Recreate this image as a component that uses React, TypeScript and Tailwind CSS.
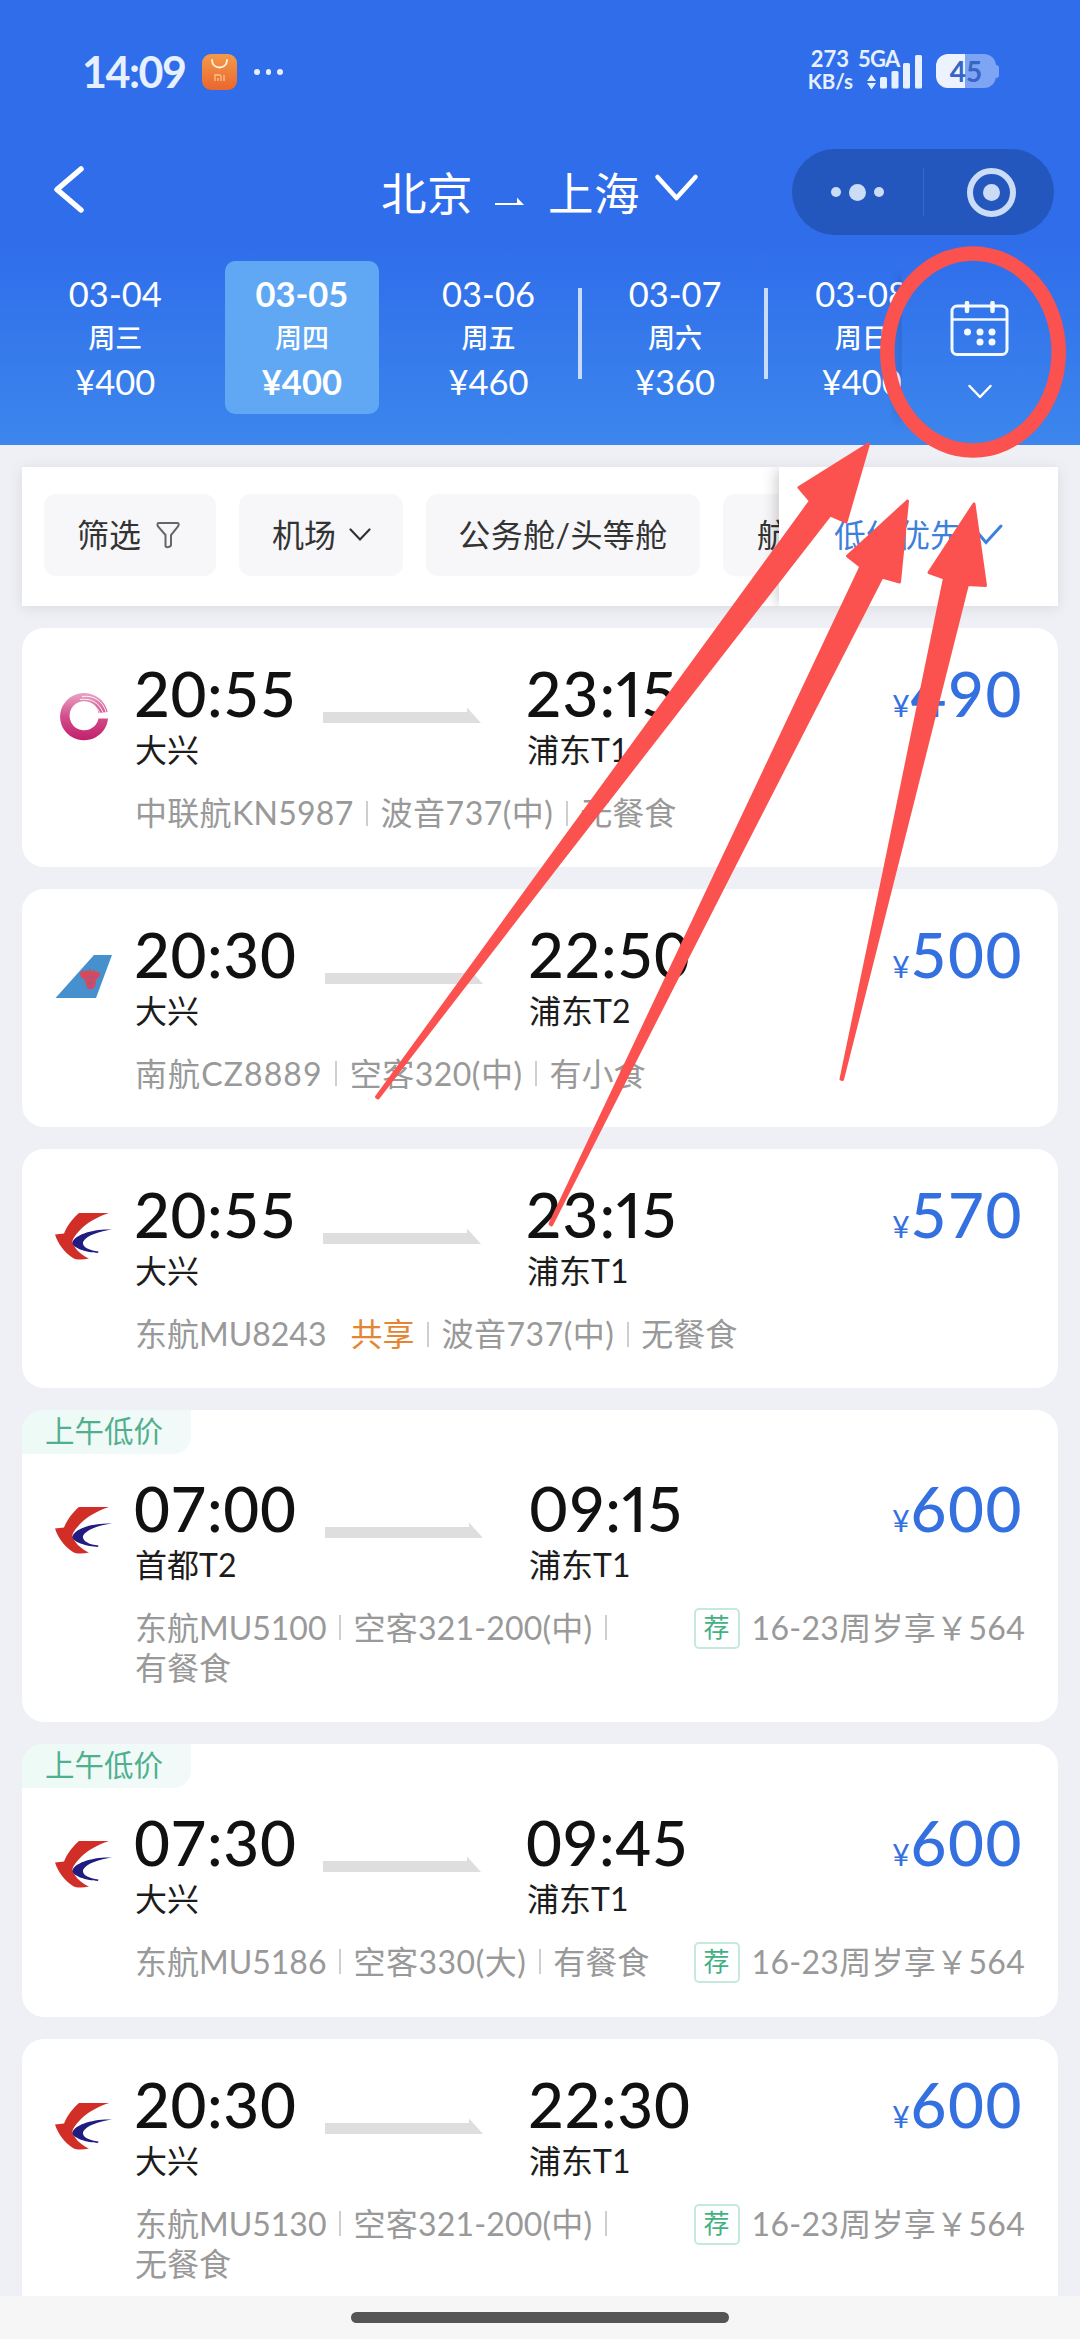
import React from "react";

type Airline = "cu" | "cz" | "mu";

interface Flight {
  airline: Airline;
  dep: string;
  depPort: string;
  arr: string;
  arrPort: string;
  price: string;
  code: string;
  plane: string;
  meal: string;
  shared?: boolean;
  tag?: string;
  promo?: string;
  narrow?: boolean;
}

const flights: Flight[] = [
  { airline: "cu", dep: "20:55", depPort: "大兴", arr: "23:15", arrPort: "浦东T1", price: "490", code: "中联航KN5987", plane: "波音737(中)", meal: "无餐食", narrow: true },
  { airline: "cz", dep: "20:30", depPort: "大兴", arr: "22:50", arrPort: "浦东T2", price: "500", code: "南航CZ8889", plane: "空客320(中)", meal: "有小食" },
  { airline: "mu", dep: "20:55", depPort: "大兴", arr: "23:15", arrPort: "浦东T1", price: "570", code: "东航MU8243", plane: "波音737(中)", meal: "无餐食", shared: true, narrow: true },
  { airline: "mu", dep: "07:00", depPort: "首都T2", arr: "09:15", arrPort: "浦东T1", price: "600", code: "东航MU5100", plane: "空客321-200(中)", meal: "有餐食", tag: "上午低价", promo: "16-23周岁享￥564" },
  { airline: "mu", dep: "07:30", depPort: "大兴", arr: "09:45", arrPort: "浦东T1", price: "600", code: "东航MU5186", plane: "空客330(大)", meal: "有餐食", tag: "上午低价", promo: "16-23周岁享￥564", narrow: true },
  { airline: "mu", dep: "20:30", depPort: "大兴", arr: "22:30", arrPort: "浦东T1", price: "600", code: "东航MU5130", plane: "空客321-200(中)", meal: "无餐食", promo: "16-23周岁享￥564" },
];

const codeTracking: Record<Airline, string> = {
  cu: "tracking-[0.300px]",
  cz: "tracking-[1.100px]",
  mu: "tracking-[0px]",
};

const days = [
  { date: "03-04", week: "周三", price: "¥400" },
  { date: "03-05", week: "周四", price: "¥400", active: true },
  { date: "03-06", week: "周五", price: "¥460" },
  { date: "03-07", week: "周六", price: "¥360", divider: true },
  { date: "03-08", week: "周日", price: "¥400", divider: true },
];

function AirlineLogo({ kind }: { kind: Airline }) {
  if (kind === "cu") {
    return (
      <svg width="58" height="50" viewBox="0 0 58 50" fill="none">
        <defs>
          <linearGradient id="cu" x1="0" y1="0" x2="0" y2="1">
            <stop offset="0" stopColor="#e9a3c6" />
            <stop offset="0.5" stopColor="#d24d8c" />
            <stop offset="1" stopColor="#c2206a" />
          </linearGradient>
        </defs>
        <path d="M53 27.5A24 23.6 0 1 1 52.6 21L43.5 22A14.6 14.6 0 1 0 43.5 27.5Z" fill="url(#cu)" />
        <path d="M27 5.5C39 4 48 10 51 21M25 8.500C37 7 44 12 48 21.500M25 11.500C35 10 41 14 45 22" stroke="#fff" strokeWidth="0.9" />
      </svg>
    );
  }
  if (kind === "cz") {
    return (
      <svg width="58" height="50" viewBox="0 0 58 50">
        <path d="M39 3H57L41 46H0.500Z" fill="#4690cd" />
        <path d="M25 21C27 17 31 21 32 18L33.500 20L35 15.500L36.500 20L38.500 18C40 21 43 18 45 22C45 26 42 26 41 28C41 32 40 35 38 37H33C31 35 31 32 30 28C28 27 25 25 25 21Z" fill="#d8495c" />
        <path d="M31 25H41M35.500 27V36M32.500 31H39" stroke="#8b5f9a" strokeWidth="0.9" />
      </svg>
    );
  }
  return (
    <svg width="58" height="50" viewBox="0 0 58 50">
      <path d="M24 1H54C42 5 32 11 26 17C20 23 17 28 17.500 30C19 36 25 42.500 34 46.500C28 48 21 48 18 46C9 40 3 32 0 22.500L9 21.500C12 14 18 6 24 1Z" fill="#d12e28" />
      <path d="M57 17.500C45 19 31 23.500 28 30C27 35 34 38.500 43.500 39.500L43 41C32 40.500 17 36 17.500 30.500C19 23 38 16.500 57 17.500Z" fill="#201c80" />
    </svg>
  );
}

function Pipe() {
  return <span className="mx-[12.500px] h-[25px] w-[2px] shrink-0 bg-[#cfcfcf]" />;
}

function Stop({ time, port }: { time: string; port: string }) {
  const figures = time.includes("1") ? "proportional-nums tracking-[1.200px]" : "tabular-nums tracking-[0.600px]";
  return (
    <>
      <div className={`-ml-px whitespace-nowrap text-[62px] font-medium leading-[64px] text-[#111] ${figures}`}>{time}</div>
      <div className="mt-[5px] text-[32px] leading-[40px] text-[#1c1c1c]">{port}</div>
    </>
  );
}

function FlightCard({ f }: { f: Flight }) {
  return (
    <article className="shrink-0 overflow-hidden rounded-[22px] bg-white">
      {f.tag && (
        <div className="flex h-[44px] w-[169px] items-center rounded-br-[18px] bg-gradient-to-r from-[#edfaf6] to-[#f2faf9] pb-[2px] pl-[23px] text-[29.500px] text-[#50b08e]">
          {f.tag}
        </div>
      )}
      <div className={f.tag ? "flex pb-[34px] pt-[22px]" : "flex pb-[33.600px] pt-[33px]"}>
        <div className="ml-[33px] mt-[30px] w-[80px] shrink-0">
          <AirlineLogo kind={f.airline} />
        </div>
        <div className="flex grow flex-col">
          <div className="flex pr-[35px]">
            <div className={f.narrow ? "w-[188px]" : "w-[190px]"}>
              <Stop time={f.dep} port={f.depPort} />
            </div>
            <svg className="mt-[46px]" width="159" height="17" viewBox="0 0 159 17">
              <path d="M0 5H144V0.500L158 16H0Z" fill="#dedede" />
            </svg>
            <div className="ml-[45px]">
              <Stop time={f.arr} port={f.arrPort} />
            </div>
            <div className="ml-auto flex h-[64px] items-baseline text-[#3470df]">
              <span className="mr-px text-[30px] leading-[64px]">¥</span>
              <span className="text-[62px] font-medium tabular-nums leading-[64px] tracking-[1.500px]">{f.price}</span>
            </div>
          </div>
          <div className="mt-[23px] flex items-start justify-between pr-[33px] text-[32px] leading-[40px] text-[#999]">
            <div className={`flex flex-wrap items-center whitespace-nowrap ${f.promo ? "max-w-[545px]" : ""}`}>
              <span className={codeTracking[f.airline]}>{f.code}</span>
              {f.shared && <span className="ml-[24px] text-[#e58530]">共享</span>}
              <Pipe />
              <span className={f.plane.includes("-") ? "tracking-[0.200px]" : "tracking-[0.500px]"}>{f.plane}</span>
              <Pipe />
              <span>{f.meal}</span>
            </div>
            {f.promo && (
              <div className="flex items-center whitespace-nowrap">
                <span className="mr-[12px] flex h-[41px] w-[46px] items-center justify-center rounded-[5px] border-2 border-[#c5e9dc] pb-[2px] text-[26px] leading-none text-[#43b083]">
                  荐
                </span>
                <span className="tracking-[0.300px]">{f.promo}</span>
              </div>
            )}
          </div>
        </div>
      </div>
    </article>
  );
}

function StatusBar() {
  return (
    <div className="flex h-[145px] items-start pl-[82px] pr-[81px] text-[#e6f0ff]">
      <span className="mt-[46px] w-[120px] text-[43px] font-bold leading-[52px] tracking-[-1.500px]">14:09</span>
      <svg className="mt-[54px]" width="36" height="36" viewBox="0 0 36 36" fill="none">
        <defs>
          <linearGradient id="bag" x1="0" y1="0" x2="0" y2="1">
            <stop offset="0" stopColor="#f39a4a" />
            <stop offset="1" stopColor="#ea662d" />
          </linearGradient>
        </defs>
        <rect width="35" height="36" rx="9" fill="url(#bag)" />
        <path d="M10 6C10 16 25 16 25 6" stroke="#fff1df" strokeWidth="1.800" strokeLinecap="round" />
        <path d="M13 27V21H17.500C19 21 19 22 19 23V27M16 24V27M22 21V27" stroke="#ffc08f" strokeWidth="1.300" />
      </svg>
      <div className="ml-[16px] mt-[69px] flex gap-[6px]">
        <i className="h-[5.500px] w-[5.500px] rounded-full bg-[#e6f0ff]" />
        <i className="h-[5.500px] w-[5.500px] rounded-full bg-[#e6f0ff]" />
        <i className="h-[5.500px] w-[5.500px] rounded-full bg-[#e6f0ff]" />
      </div>
      <div className="ml-auto mt-[47px] flex flex-col text-[22px] font-bold leading-[23px]">
        <div className="pl-[3px]">273</div>
        <div className="text-[20.500px]">KB/s</div>
      </div>
      <div className="relative ml-[5px] mt-[46px] h-[50px] w-[65px]">
        <span className="mt-px block text-[22px] font-bold leading-[23px] tracking-[-0.800px]">5GA</span>
        <svg className="absolute left-[9px] top-[9px]" width="56" height="35" viewBox="0 0 56 35" fill="currentColor">
          <path d="M0 26L4.500 19.500L9 26ZM0 28L4.500 34.500L9 28Z" />
          <rect x="13" y="22" width="7" height="11.500" rx="1.500" />
          <rect x="24.500" y="16" width="7" height="17.500" rx="1.500" />
          <rect x="36" y="8" width="7" height="25.500" rx="1.500" />
          <rect x="48" y="0" width="7" height="33.500" rx="1.500" />
        </svg>
      </div>
      <div className="ml-[13px] mt-[54px] flex items-center">
        <div className="flex h-[34px] w-[60px] items-center justify-center rounded-[12px] bg-gradient-to-r from-[#ecf3ff] from-[48%] to-[#7ea5f3] to-[48%] text-[28px] font-bold leading-none text-[#3864c6]">
          45
        </div>
        <i className="h-[13px] w-[3px] rounded-r-full bg-[#7ea5f3]" />
      </div>
    </div>
  );
}

function NavBar() {
  return (
    <div className="flex h-[96px] items-start pl-[53px] pr-[26px] text-white">
      <svg className="mt-[20px]" width="32" height="50" viewBox="0 0 32 50" fill="none">
        <path d="M28 4L4 24.500L28 45" stroke="#fff" strokeWidth="5.500" strokeLinecap="round" strokeLinejoin="round" />
      </svg>
      <span className="ml-[296px] mt-[21px] text-[45.500px] leading-[56px] tracking-[0.500px]">北京</span>
      <svg className="ml-[22px] mt-[52px]" width="30" height="9" viewBox="0 0 30 9">
        <path d="M0 6H22V0.500L29 8H0Z" fill="#fff" />
      </svg>
      <span className="ml-[23px] mt-[21px] text-[45.500px] leading-[56px] tracking-[0.500px]">上海</span>
      <svg className="ml-[14px] mt-[27px]" width="46" height="32" viewBox="0 0 46 32" fill="none">
        <path d="M3.500 5L22.500 26L41.500 5" stroke="#fff" strokeWidth="4.500" strokeLinecap="round" strokeLinejoin="round" />
      </svg>
      <div className="ml-auto mt-[4px] flex h-[86px] w-[262px] rounded-full bg-[#2457bd]">
        <div className="flex w-[131px] items-center justify-center gap-[8px]">
          <i className="h-[10px] w-[10px] rounded-full bg-[#cbddf6]" />
          <i className="h-[17px] w-[17px] rounded-full bg-[#cbddf6]" />
          <i className="h-[10px] w-[10px] rounded-full bg-[#cbddf6]" />
        </div>
        <i className="mt-[19px] h-[48px] w-px bg-[#3a69c6]" />
        <div className="flex grow items-center justify-center pl-[5px]">
          <div className="flex h-[49px] w-[49px] items-center justify-center rounded-full border-[6.500px] border-[#cbddf6]">
            <i className="h-[17px] w-[17px] rounded-full bg-[#cbddf6]" />
          </div>
        </div>
      </div>
    </div>
  );
}

function DateStrip() {
  return (
    <div className="flex h-[204px] text-white">
      <div className="flex w-[902px] shrink-0 overflow-hidden pl-[22px]">
        {days.map((d) => (
          <div key={d.date} className="flex w-[186.600px] shrink-0 justify-center">
            {d.divider && <i className="-ml-[4px] mt-[47px] h-[91px] w-[4px] shrink-0 bg-[#c8dcf8]" />}
            <div
              className={
                d.active
                  ? "mx-auto mt-[20px] flex h-[153px] w-[154px] flex-col items-center rounded-[10px] bg-[#60a8f3] pt-[12px] font-bold"
                  : "mx-auto mt-[20px] flex h-[153px] w-[154px] flex-col items-center pt-[12px]"
              }
            >
              <span className="text-[34.500px] leading-[42px]">{d.date}</span>
              <span className="mt-[2px] text-[27px] font-medium leading-[42px]">{d.week}</span>
              <span className="mt-[2px] text-[34.500px] leading-[42px]">{d.price}</span>
            </div>
          </div>
        ))}
      </div>
      <div className="relative flex w-[178px] flex-col items-center pr-[22px] [clip-path:inset(0_0_0_-12px)]">
        <div className="absolute left-0 top-[37px] h-[140px] w-px shadow-[-2px_0_8px_1px_rgba(20,50,110,0.5)] [clip-path:inset(-10px_1px_-10px_-14px)]" />
        <svg className="mt-[60px]" width="60" height="56" viewBox="0 0 60 56" fill="none" stroke="#f2faff" strokeWidth="3">
          <rect x="2" y="5" width="55" height="48.500" rx="5" />
          <path d="M2 18.500H57" strokeWidth="2.500" />
          <path d="M17 2V10M42.500 2V10" strokeWidth="4.500" strokeLinecap="round" />
          <g fill="#f2faff" stroke="none">
            <circle cx="17.500" cy="31" r="3.500" />
            <circle cx="30" cy="31" r="3.500" />
            <circle cx="42" cy="31" r="3.500" />
            <circle cx="30" cy="41" r="3.500" />
            <circle cx="42" cy="41" r="3.500" />
          </g>
        </svg>
        <svg className="mt-[26px]" width="26" height="18" viewBox="0 0 26 18" fill="none">
          <path d="M2.500 3L13 14L23.500 3" stroke="#fff" strokeWidth="2.500" strokeLinecap="round" strokeLinejoin="round" />
        </svg>
      </div>
    </div>
  );
}

function FilterBar() {
  const chip = "flex h-[82px] shrink-0 items-center rounded-[12px] bg-[#f7f7fa] text-[32px] leading-[40px] text-[#333]";
  return (
    <div className="mx-[22px] mt-[22px] flex h-[139px] bg-white shadow-[0_2px_14px_rgba(0,0,0,0.09)]">
      <div className="flex w-[757px] gap-[23px] overflow-hidden pl-[22px] pt-[27px]">
        <div className={`${chip} w-[172px] pl-[33px]`}>
          筛选
          <svg className="ml-[15px]" width="25" height="28" viewBox="0 0 25 28" fill="none">
            <path d="M2.500 2H21.500C23 2 23 4 22 5.500L15 14V24C15 26 10 27 9.500 25V14L2 5.500C1 4 1.500 2 2.500 2Z" stroke="#666" strokeWidth="2" />
          </svg>
        </div>
        <div className={`${chip} w-[164px] pl-[33px]`}>
          机场
          <svg className="ml-[13px]" width="22" height="14" viewBox="0 0 22 14" fill="none">
            <path d="M1.500 1.500L11 11.500L20.500 1.500" stroke="#333" strokeWidth="2.200" strokeLinecap="round" />
          </svg>
        </div>
        <div className={`${chip} w-[274px] justify-center tracking-[0.400px]`}>公务舱/头等舱</div>
        <div className={`${chip} w-[170px] pl-[34px]`}>航司</div>
      </div>
      <div className="flex grow items-center bg-white pb-[4px] pl-[55px] text-[32px] leading-[40px] text-[#3d80dc] shadow-[-4px_0_14px_-2px_rgba(0,0,0,0.22)] [clip-path:inset(0_0_0_-20px)]">
        低价优先
        <svg className="ml-[8px] mt-[1px]" width="34" height="22" viewBox="0 0 34 22" fill="none">
          <path d="M2 2L16 18.500L31 2" stroke="#3d80dc" strokeWidth="3" strokeLinecap="round" />
        </svg>
      </div>
    </div>
  );
}

function Annotations() {
  return (
    <svg className="pointer-events-none absolute inset-0" width="1080" height="2339" viewBox="0 0 1080 2339">
      <ellipse cx="973" cy="352" rx="85.700" ry="98.500" fill="none" stroke="#fb5250" strokeWidth="14.500" />
      <g fill="#fb5250" stroke="#fb5250" strokeWidth="3" strokeLinejoin="round">
        <path d="M868.500 444L799 487.500L810.500 501L541.500 870L376.500 1097L378 1098L554 870L830 515L846 522Z" />
        <path d="M907.500 501L847.500 556L861 566.500L717.500 870L550 1224L551.500 1225L732 870L882 577L899.500 582Z" />
        <path d="M974 504L929 572.500L944.500 578L884.500 870L841 1079L842.500 1079.500L895.500 870L967.500 584.500L985.500 585.500Z" />
      </g>
    </svg>
  );
}

export default function App() {
  return (
    <div className="relative flex h-[2339px] w-[1080px] flex-col overflow-hidden bg-[#eef0f5] font-['Lato','Noto_Sans_CJK_SC',sans-serif]">
      <header className="h-[445px] shrink-0 bg-gradient-to-b from-[#306deb] from-[55%] to-[#3c86ec]">
        <StatusBar />
        <NavBar />
        <DateStrip />
      </header>
      <main className="flex h-[1851px] shrink-0 flex-col overflow-hidden">
        <div className="shrink-0">
          <FilterBar />
        </div>
        <div className="mt-[22px] flex flex-col gap-[22px] px-[22px]">
          {flights.map((f) => (
            <FlightCard key={f.code} f={f} />
          ))}
        </div>
      </main>
      <footer className="flex h-[43px] shrink-0 justify-center bg-[#f6f6f6] pt-[16px]">
        <div className="h-[11px] w-[378px] rounded-full bg-[#555]" />
      </footer>
      <Annotations />
    </div>
  );
}
